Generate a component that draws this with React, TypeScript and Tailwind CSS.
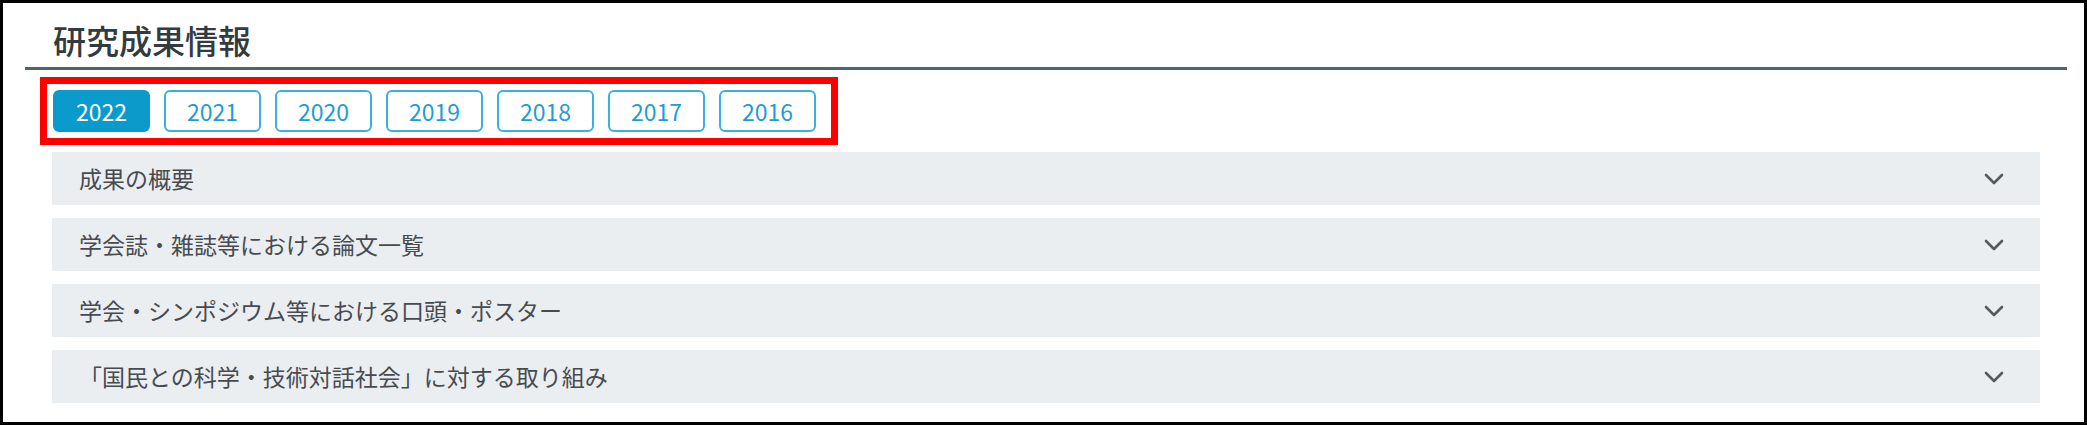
const years = ['2022', '2021', '2020', '2019', '2018', '2017', '2016'];

const sections = [
  '成果の概要',
  '学会誌・雑誌等における論文一覧',
  '学会・シンポジウム等における口頭・ポスター',
  '「国民との科学・技術対話社会」に対する取り組み',
];

function Chevron() {
  return (
    <svg width="20" height="12" viewBox="0 0 20 12" fill="none" className="shrink-0">
      <polyline points="2,2 10,10 18,2" stroke="#555a60" strokeWidth="2.6" strokeLinecap="round" strokeLinejoin="round" />
    </svg>
  );
}

export default function App() {
  const active = '2022';

  return (
    <div
      className="w-[2087px] h-[425px] bg-white border-[3px] border-black pl-[22px] pr-[17px]"
      style={{ fontFamily: '"Noto Sans CJK JP", "Noto Sans", sans-serif' }}
    >
      <h2 className="pt-[17px] pb-[7px] pl-[28px] text-[33px] leading-[40px] font-medium text-[#333a40] border-b-[3px] border-[#4f6470]">
        研究成果情報
      </h2>

      <div className="mt-[7px] ml-[15px] w-fit border-[7px] border-[#ff0000] pt-[6px] pb-[6px] pl-[6px] pr-[15px]">
        <div className="flex gap-[14px]">
          {years.map((y) => (
            <button
              key={y}
              className={
                y === active
                  ? 'w-[97px] h-[42px] rounded-[6px] border-2 border-[#0a9acb] bg-[#0a9acb] text-white text-[23px] leading-none'
                  : 'w-[97px] h-[42px] rounded-[6px] border-2 border-[#3ab0dc] bg-white text-[#1f9dd2] text-[23px] leading-none'
              }
            >
              {y}
            </button>
          ))}
        </div>
      </div>

      <div className="mt-[7px] mx-[27px] flex flex-col gap-[13px]">
        {sections.map((s) => (
          <div key={s} className="h-[53px] bg-[#ebeef1] flex items-center justify-between pl-[27px] pr-[36px]">
            <span className="text-[23px] text-[#474b50]">{s}</span>
            <Chevron />
          </div>
        ))}
      </div>
    </div>
  );
}
